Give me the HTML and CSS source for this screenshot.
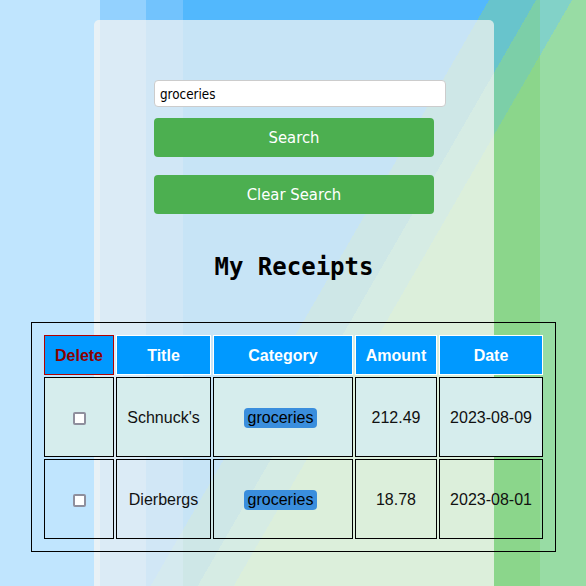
FILE: index.html
```html
<!DOCTYPE html>
<html lang="en">
<head>
<meta charset="utf-8">
<title>My Receipts</title>
<link rel="stylesheet" href="styles.css">
</head>
<body>
<main class="card">
  <form class="search">
    <input class="search-input" type="text" value="groceries">
    <button class="btn btn-search" type="button">Search</button>
    <button class="btn btn-clear" type="button">Clear Search</button>
  </form>
  <h1 class="title">My Receipts</h1>
  <div class="table-box">
    <table class="receipts">
      <thead>
        <tr class="head-row">
          <th class="col-delete th-delete">Delete</th>
          <th class="col-title">Title</th>
          <th class="col-category">Category</th>
          <th class="col-amount">Amount</th>
          <th class="col-date">Date</th>
        </tr>
      </thead>
      <tbody>
        <tr class="row row-odd">
          <td><input class="check" type="checkbox"></td>
          <td>Schnuck's</td>
          <td><span class="badge">groceries</span></td>
          <td>212.49</td>
          <td>2023-08-09</td>
        </tr>
        <tr class="row">
          <td><input class="check" type="checkbox"></td>
          <td>Dierbergs</td>
          <td><span class="badge">groceries</span></td>
          <td>18.78</td>
          <td>2023-08-01</td>
        </tr>
      </tbody>
    </table>
  </div>
</main>
</body>
</html>
```
FILE: styles.css
```css
html {
  background-color: #c0e5fe;
  background-image:
    linear-gradient(#93d1fe, #93d1fe),
    linear-gradient(120deg, #72c3fd 297px, #7fcde6 297px),
    linear-gradient(120deg, #52b8fd 265px, #68c4cc 265px, #68c4cc 305.7px, #82d2c4 305.7px, #82d2c4 336.9px, #98dca4 336.9px),
    linear-gradient(120deg, #68c4cc 36.4px, #7ccfa8 36.4px, #7ccfa8 67.5px, #8bd68b 67.5px),
    linear-gradient(120deg, #82d2c8 27.7px, #98dca4 27.7px);
  background-size: 46px 2000px, 37px 2000px, 311px 2000px, 46px 2000px, 46px 2000px;
  background-position: 100px 0, 146px 0, 183px 0, 494px 0, 540px 0;
  background-repeat: no-repeat;
}

body {
  margin: 0;
  padding: 20px 0 0 2px;
}

.card {
  width: 280px;
  margin: 0 auto;
  padding: 60px 60px 60px;
  background: rgba(250, 246, 242, 0.7);
  border-radius: 5px;
  display: flex;
  flex-direction: column;
  align-items: center;
}

.search {
  align-self: stretch;
  margin: 0;
}

.search-input {
  display: block;
  width: 280px;
  box-sizing: content-box;
  margin: 0 0 11px;
  padding: 6px 5px 4px;
  line-height: 15px;
  height: 15px;
  border: 1px solid #cccccc;
  border-radius: 4px;
  background: #ffffff;
  color: #000000;
  font-family: "DejaVu Sans Condensed", "Open Sans", sans-serif;
  font-size: 13.33px;
  outline: none;
}

.btn {
  display: block;
  width: 100%;
  height: 39px;
  margin: 0;
  padding: 0 0 1px;
  border: none;
  border-radius: 4px;
  background: #4caf50;
  color: #ffffff;
  font-family: "DejaVu Sans Condensed", "Open Sans", sans-serif;
  font-size: 16.5px;
}

.btn-search {
  margin-bottom: 18px;
}

.title {
  margin: 39px 0 41px;
  font-family: "DejaVu Sans Mono", monospace;
  font-weight: bold;
  font-size: 24px;
  line-height: 28px;
  color: #000000;
  text-align: center;
}

.table-box {
  flex: none;
  margin-left: -1px;
  border: 1px solid #000000;
  padding: 10px;
}

.receipts {
  border-collapse: separate;
  border-spacing: 2px;
  table-layout: fixed;
  width: 503px;
  font-family: "Liberation Sans", Arial, sans-serif;
  font-size: 16px;
  color: #111111;
}

.receipts th,
.receipts td {
  box-sizing: border-box;
  padding: 0;
  text-align: center;
  vertical-align: middle;
}

.head-row {
  height: 40px;
}

.receipts th {
  height: 40px;
  padding-top: 1px;
  background: #0099ff;
  border: 1px solid #ffffff;
  color: #ffffff;
  font-weight: bold;
}

.receipts th.th-delete {
  border-color: #b30000;
  color: #8b0000;
}

.col-delete { width: 70px; }
.col-title { width: 95px; }
.col-category { width: 140px; }
.col-amount { width: 82px; }
.col-date { width: 104px; }

.row {
  height: 80px;
}

.receipts td {
  height: 80px;
  padding-top: 2px;
  border: 1px solid #000000;
}

.row-odd td {
  background: #d6eded;
}

.check {
  appearance: none;
  -webkit-appearance: none;
  display: inline-block;
  box-sizing: border-box;
  margin: 0;
  width: 13px;
  height: 13px;
  border: 2px solid #8f8f9d;
  border-radius: 2px;
  background: #ffffff;
  vertical-align: middle;
}

.badge {
  display: inline-block;
  margin-right: 5px;
  padding: 1px 4px;
  border-radius: 4px;
  background: #3a8edd;
  color: #000000;
}
```
